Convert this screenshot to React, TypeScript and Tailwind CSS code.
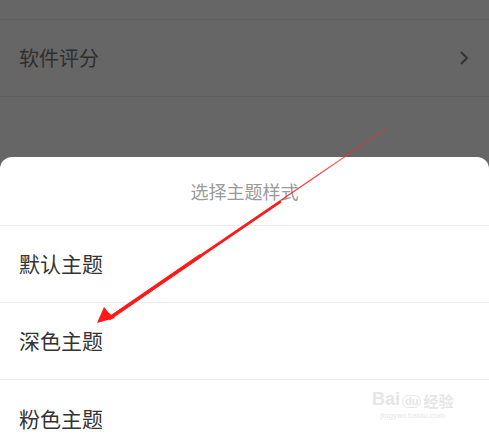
export default function App() {
  const font = { fontFamily: '"Noto Sans CJK SC", "Noto Sans", sans-serif' };
  const themes = ['默认主题', '深色主题', '粉色主题'];

  return (
    <div className="relative w-[489px] h-[436px] overflow-hidden bg-[#666666]" style={font}>
      {/* dimmed settings page */}
      <div className="h-[20px] border-b border-[#5e5e5e]" />
      <div className="h-[77px] flex items-center justify-between pl-[19px] pr-[20px] border-b border-[#5e5e5e]">
        <span className="text-[20px] text-[#2e2e2e]">软件评分</span>
        <svg width="10" height="16" viewBox="0 0 10 16" className="text-[#333]">
          <path d="M2 2 L8 8 L2 14" fill="none" stroke="currentColor" strokeWidth="2" />
        </svg>
      </div>
      <div className="h-[60px]" />

      {/* bottom sheet */}
      <div className="bg-white rounded-t-[12px]">
        <div className="h-[69px] flex items-center justify-center border-b border-[#ececec]">
          <span className="text-[18px] text-[#9a9a9a]">选择主题样式</span>
        </div>
        {themes.map((t, i) => (
          <div
            key={t}
            className={`h-[77px] flex items-center pl-[19px] ${i < themes.length - 1 ? 'border-b border-[#ececec]' : ''}`}
          >
            <span className="text-[21px] text-[#333333]">{t}</span>
          </div>
        ))}
      </div>

      {/* red annotation arrow */}
      <svg className="absolute inset-0 pointer-events-none" width="489" height="436">
        <defs>
          <linearGradient id="fade" x1="388" y1="127" x2="100" y2="322" gradientUnits="userSpaceOnUse">
            <stop offset="0" stopColor="#ff2a2a" stopOpacity="0.3" />
            <stop offset="0.25" stopColor="#ff2020" stopOpacity="0.9" />
            <stop offset="1" stopColor="#ff1a1a" />
          </linearGradient>
        </defs>
        <path d="M387 128 L108 318" stroke="url(#fade)" strokeWidth="1.2" />
        <path d="M280 202 L110 318" stroke="#ff1a1a" strokeWidth="2.5" strokeLinecap="round" />
        <path d="M200 256 L110 318" stroke="#ff1a1a" strokeWidth="3.5" strokeLinecap="round" />
        <polygon points="97,323 104,307 109,313 115,318" fill="#ff1a1a" />
      </svg>

      {/* watermark */}
      <div className="absolute left-[372px] top-[390px] flex flex-col items-center text-[#e6e6e6] pointer-events-none">
        <div className="flex items-end gap-[2px] leading-none">
          <span className="text-[18px] font-bold" style={{ fontFamily: '"Liberation Sans", sans-serif' }}>Bai</span>
          <span className="text-[11px] font-bold border border-[#e6e6e6] rounded-full px-[2px]" style={{ fontFamily: '"Liberation Sans", sans-serif' }}>du</span>
          <span className="text-[15px] font-bold">经验</span>
        </div>
        <span className="text-[8px] mt-[2px]" style={{ fontFamily: '"Liberation Sans", sans-serif' }}>jingyan.baidu.com</span>
      </div>
    </div>
  );
}
